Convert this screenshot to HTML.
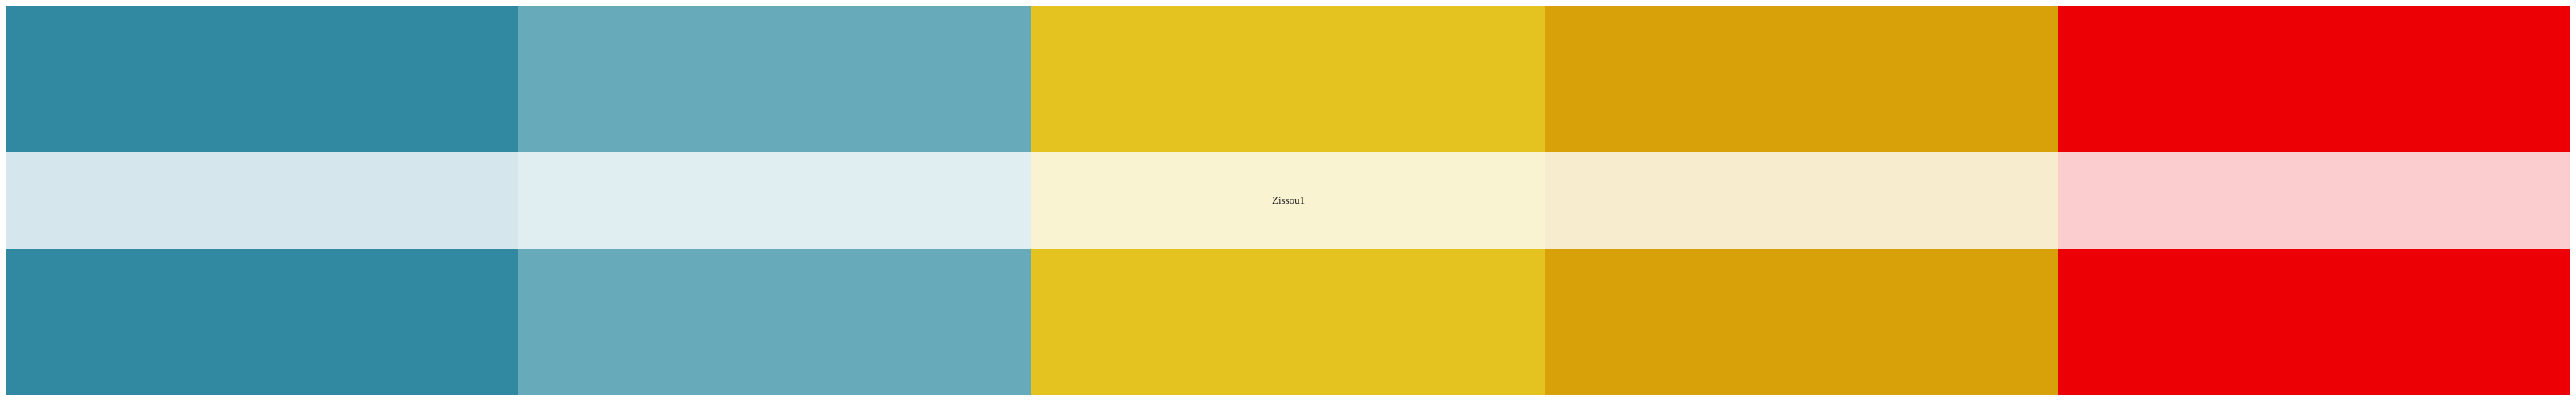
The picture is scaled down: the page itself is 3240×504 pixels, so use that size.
<!DOCTYPE html>
<html><head><style>
html,body{margin:0;padding:0;width:3240px;height:504px;background:#fff;overflow:hidden}
.c{position:absolute;top:7px;height:490px;width:645.2px}
.t,.b{position:absolute;left:0;right:0;height:184px}
.t{top:0}.b{top:306px}
.m{position:absolute;left:0;right:0;top:184px;height:122px}
.lab{position:absolute;left:1600px;top:244px;font:13px "Liberation Serif",serif;color:#222}
</style></head><body>
<div class="c" style="left:7px"><div class="t" style="background:#3188a1"></div><div class="m" style="background:#d5e6ec"></div><div class="b" style="background:#3188a1"></div></div>
<div class="c" style="left:652.2px"><div class="t" style="background:#67aab9"></div><div class="m" style="background:#e0edf1"></div><div class="b" style="background:#67aab9"></div></div>
<div class="c" style="left:1297.4px"><div class="t" style="background:#e4c320"></div><div class="m" style="background:#f9f3d2"></div><div class="b" style="background:#e4c320"></div></div>
<div class="c" style="left:1942.6px"><div class="t" style="background:#d8a109"></div><div class="m" style="background:#f7ecce"></div><div class="b" style="background:#d8a109"></div></div>
<div class="c" style="left:2587.8px"><div class="t" style="background:#ec0005"></div><div class="m" style="background:#fbcdcf"></div><div class="b" style="background:#ec0005"></div></div>
<div class="lab">Zissou1</div>
</body></html>
